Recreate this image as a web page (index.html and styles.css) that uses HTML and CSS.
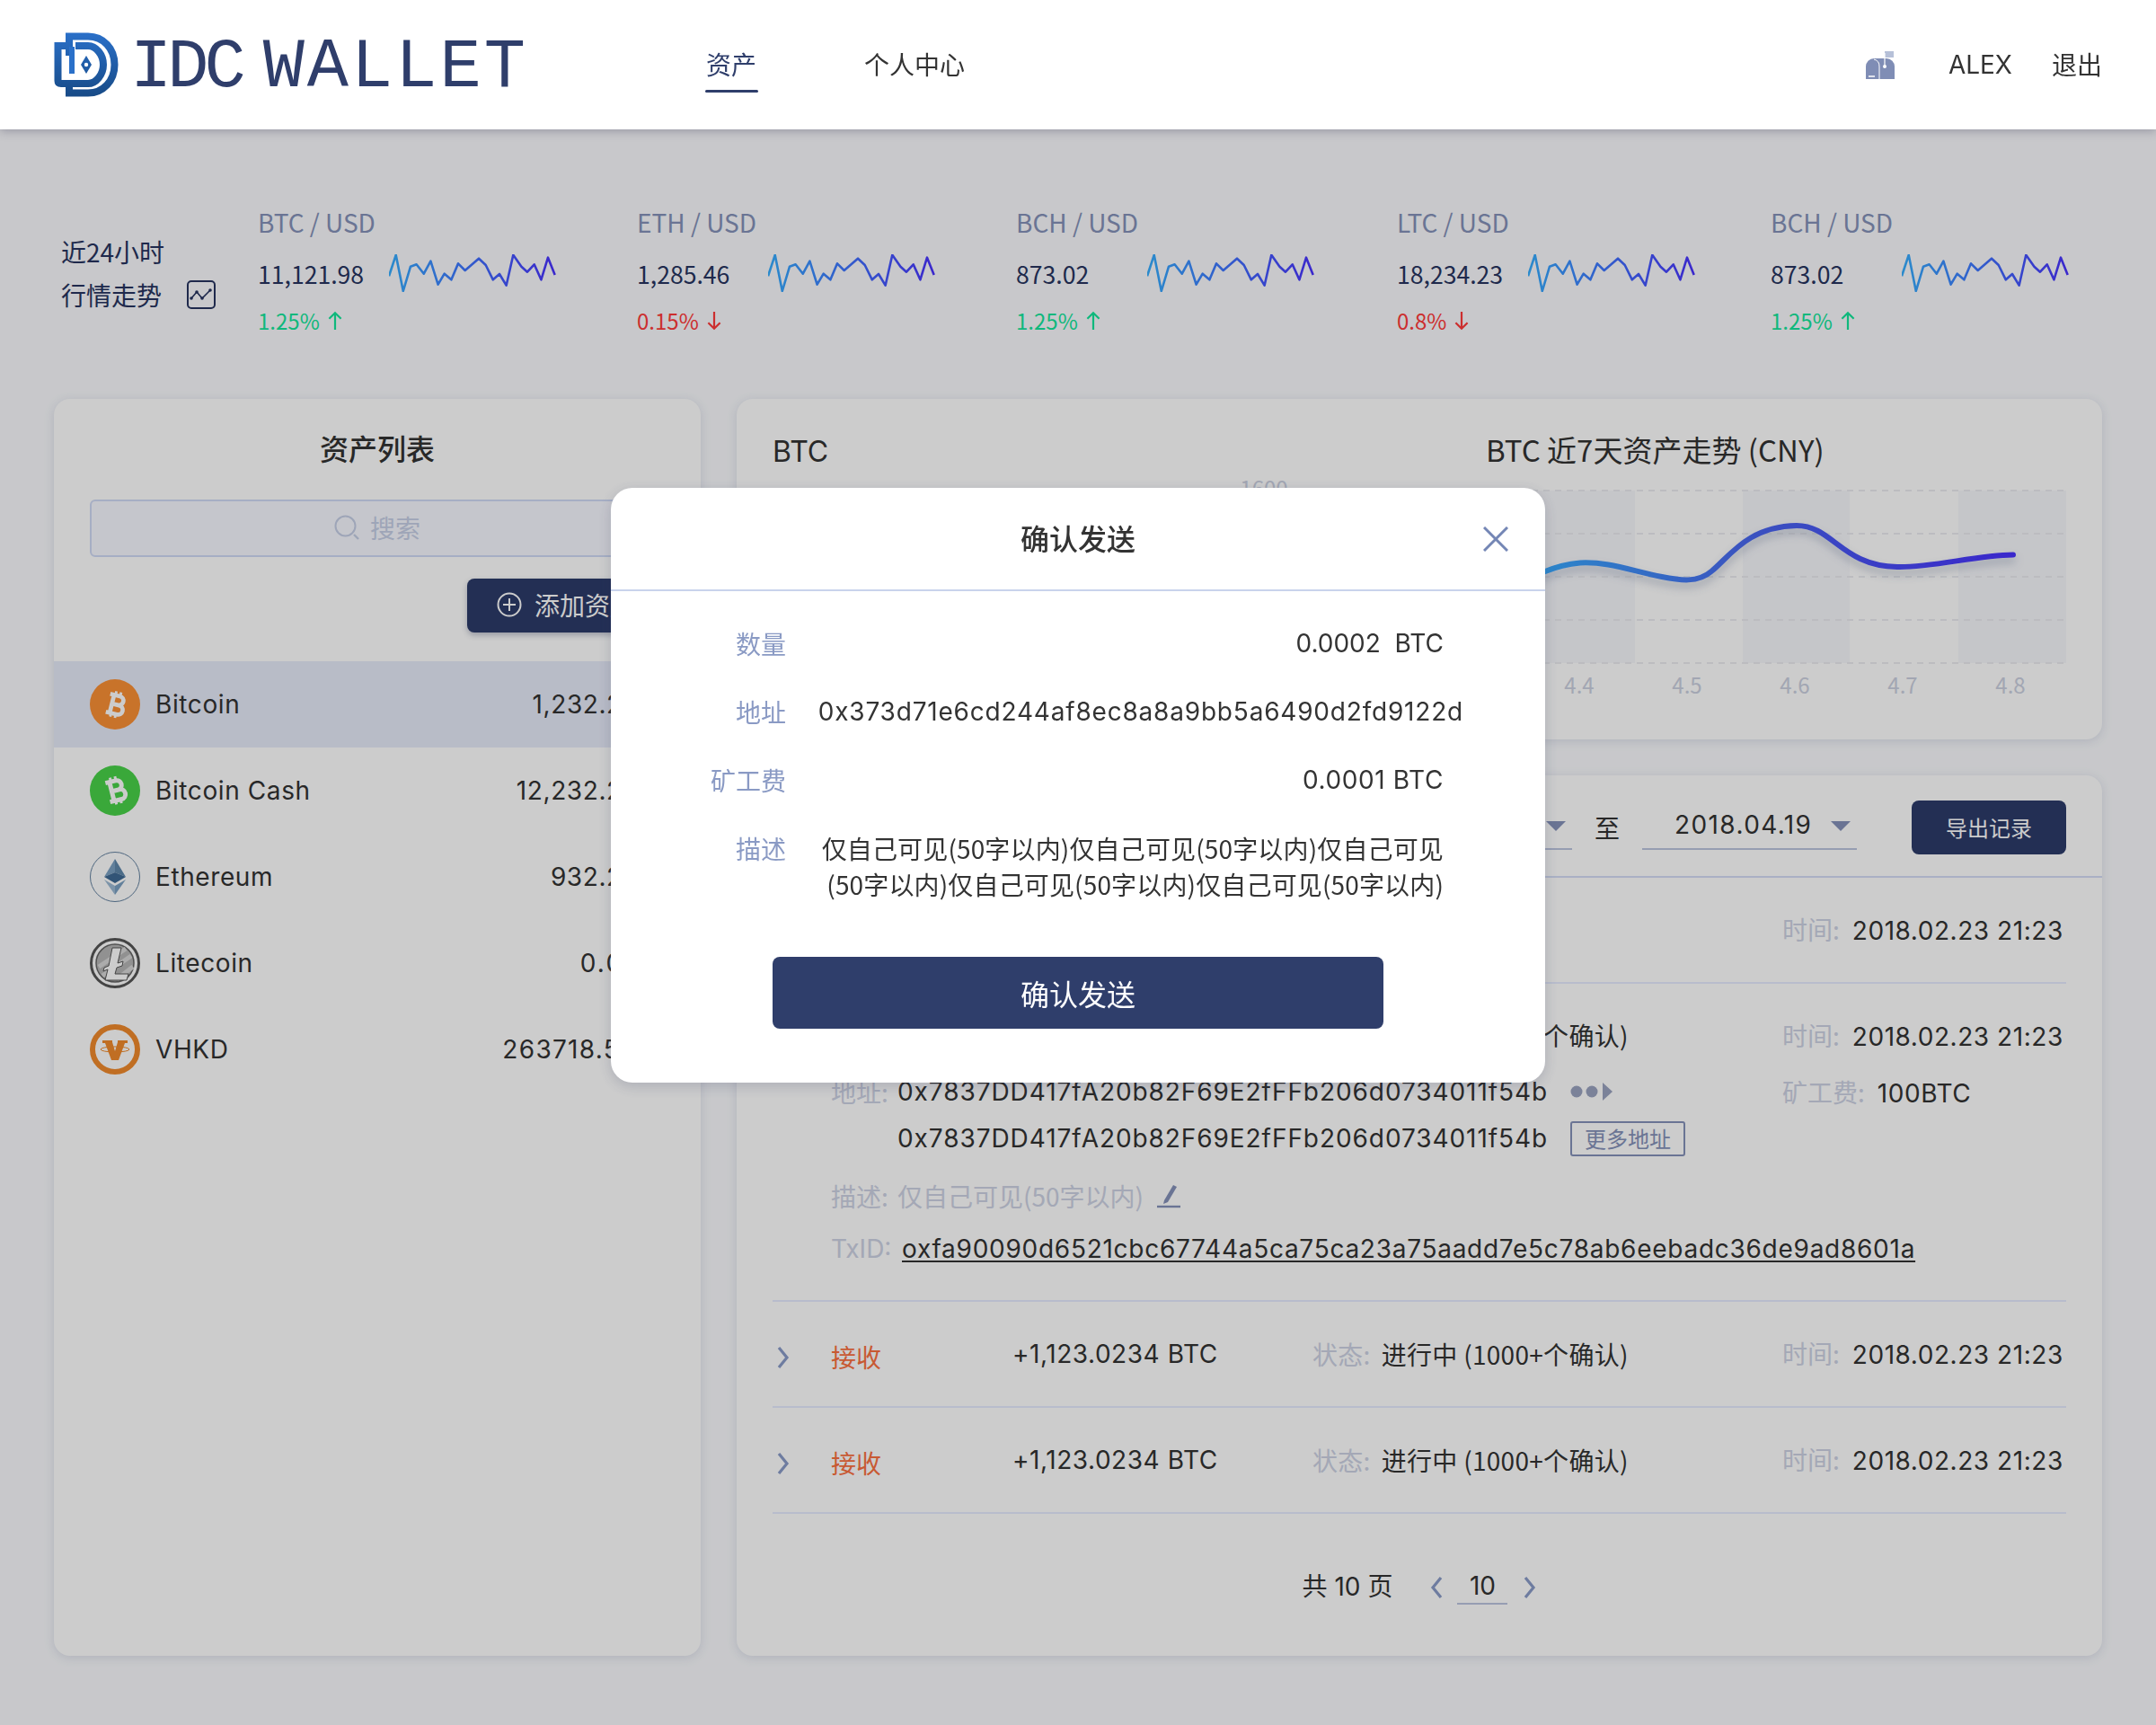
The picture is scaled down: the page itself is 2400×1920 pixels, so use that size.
FILE: index.html
```html
<!DOCTYPE html>
<html lang="zh-CN">
<head>
  <meta charset="UTF-8" />
  <title>IDC WALLET</title>
  <link rel="stylesheet" href="styles.css">
</head>
<body>
  <svg class="defs" width="0" height="0">
    <defs>
      <linearGradient id="sparkGrad" gradientUnits="userSpaceOnUse" x1="0" y1="0" x2="186" y2="0">
        <stop offset="0" stop-color="#36aeff"/>
        <stop offset="1" stop-color="#4a32ff"/>
      </linearGradient>
      <linearGradient id="curveGrad" gradientUnits="userSpaceOnUse" x1="1700" y1="0" x2="2241" y2="0">
        <stop offset="0" stop-color="#36aeff"/>
        <stop offset="0.45" stop-color="#4a68f0"/>
        <stop offset="1" stop-color="#4a32ff"/>
      </linearGradient>
      <linearGradient id="logoGrad" gradientUnits="userSpaceOnUse" x1="0" y1="0" x2="0" y2="72">
        <stop offset="0" stop-color="#2a70c9"/>
        <stop offset="1" stop-color="#174a86"/>
      </linearGradient>
      <symbol id="spark" viewBox="0 0 186 42">
        <polyline fill="none" stroke="url(#sparkGrad)" stroke-width="2.6" stroke-linejoin="round" points="0,24.3 7.7,0.8 15.8,41 24,13.7 30.6,11.3 38.8,21.7 46.4,7.7 54.6,33.7 61.7,21.7 69.4,28.3 77,10.3 84.7,18 100,4.7 107.7,12 115.8,28.3 123,22 130.6,34.7 138.3,0.8 147.4,13.7 154,19.7 161.7,11.3 169.4,28.3 177,3.7 184.7,23"/>
      </symbol>
      <symbol id="up" viewBox="0 0 16 20">
        <path d="M8 19V2M2 8l6-6 6 6" fill="none" stroke="#13e69b" stroke-width="2"/>
      </symbol>
      <symbol id="down" viewBox="0 0 16 20">
        <path d="M8 1v17M2 12l6 6 6-6" fill="none" stroke="#ff3a3a" stroke-width="2"/>
      </symbol>
      <symbol id="btcMark" viewBox="0 0 24 24">
        <path d="M7 5.600H14a3.200 3.200 0 0 1 0 6.400H9.500M9.500 12H15a3.300 3.300 0 0 1 0 6.600H7M9.800 5.600V18.600" fill="none" stroke="#fff" stroke-width="3"/>
        <path d="M10.800 2.800V6M14.200 2.800V6M10.800 18V21.200M14.200 18V21.200" fill="none" stroke="#fff" stroke-width="1.800"/>
      </symbol>
      <symbol id="chevR" viewBox="0 0 14 26">
        <path d="M2 2l9 11-9 11" fill="none" stroke="#8a9cc8" stroke-width="3.200"/>
      </symbol>
    </defs>
  </svg>

  <header class="navbar">
    <div class="logo">
      <svg class="logo-mark" viewBox="0 0 72 72">
        <path d="M17 26V4.500H38C55 4.500 67.500 18 67.500 36S55 67.500 38 67.500H17V60" fill="none" stroke="url(#logoGrad)" stroke-width="8"/>
        <path d="M13 15H4.500V54Q4.500 57 8 57H38C47 57 55 47 55 36S47 15 38 15H24" fill="none" stroke="url(#logoGrad)" stroke-width="8"/>
        <path d="M17 16h6v30h-6z" fill="#2a70c9"/>
        <path d="M36 26l6 10-6 10-6-10z" fill="url(#logoGrad)"/>
        <circle cx="36" cy="36" r="2.200" fill="#fff"/>
      </svg>
      <span class="logo-text"><span class="logo-idc">IDC</span><span class="logo-wallet">WALLET</span></span>
    </div>
    <nav class="nav-links">
      <a class="active" href="#">资产</a>
      <a href="#">个人中心</a>
    </nav>
    <div class="nav-user">
      <svg class="mailbox" viewBox="0 0 32 32">
        <path d="M21 1h10v7H21z" fill="#b6c0d8"/>
        <path d="M9 9h14a9 9 0 0 1 9 9v14H0V18a9 9 0 0 1 9-9z" fill="#7f8db5"/>
        <path d="M15 32V18a8 8 0 0 0-6-8" fill="none" stroke="#fff" stroke-width="1"/>
        <path d="M21 3v14" stroke="#fff" stroke-width="1.200"/>
        <circle cx="21" cy="18" r="2" fill="#fff"/>
        <path d="M3 29h7" stroke="#fff" stroke-width="1.500"/>
      </svg>
      <span class="user-name">ALEX</span>
      <a href="#">退出</a>
    </div>
  </header>

  <section class="ticker">
    <div class="ticker-label">
      <div>近24小时</div>
      <div class="ticker-label-2">行情走势
        <svg class="trend-icon" viewBox="0 0 32 32">
          <rect x="1" y="1" width="30" height="30" rx="4" fill="none" stroke="#273460" stroke-width="2"/>
          <path d="M5 20l6-7 6 7 9-9" fill="none" stroke="#273460" stroke-width="1.600"/>
          <circle cx="11" cy="13" r="1.800" fill="#273460"/><circle cx="17" cy="20" r="1.800" fill="#273460"/><circle cx="26" cy="11" r="1.800" fill="#273460"/><circle cx="5" cy="20" r="1.800" fill="#273460"/>
        </svg>
      </div>
    </div>
    <div class="tick">
      <div class="tick-name">BTC / USD</div>
      <div class="tick-mid"><span class="tick-val">11,121.98</span><svg class="spark"><use href="#spark"/></svg></div>
      <div class="tick-pct up">1.25% <svg class="arrow"><use href="#up"/></svg></div>
    </div>
    <div class="tick">
      <div class="tick-name">ETH / USD</div>
      <div class="tick-mid"><span class="tick-val">1,285.46</span><svg class="spark"><use href="#spark"/></svg></div>
      <div class="tick-pct down">0.15% <svg class="arrow"><use href="#down"/></svg></div>
    </div>
    <div class="tick">
      <div class="tick-name">BCH / USD</div>
      <div class="tick-mid"><span class="tick-val">873.02</span><svg class="spark"><use href="#spark"/></svg></div>
      <div class="tick-pct up">1.25% <svg class="arrow"><use href="#up"/></svg></div>
    </div>
    <div class="tick">
      <div class="tick-name">LTC / USD</div>
      <div class="tick-mid"><span class="tick-val">18,234.23</span><svg class="spark"><use href="#spark"/></svg></div>
      <div class="tick-pct down">0.8% <svg class="arrow"><use href="#down"/></svg></div>
    </div>
    <div class="tick">
      <div class="tick-name">BCH / USD</div>
      <div class="tick-mid"><span class="tick-val">873.02</span><svg class="spark"><use href="#spark"/></svg></div>
      <div class="tick-pct up">1.25% <svg class="arrow"><use href="#up"/></svg></div>
    </div>
  </section>

  <main class="content">
    <aside class="panel assets">
      <h2 class="assets-title">资产列表</h2>
      <div class="search">
        <svg class="search-icon" viewBox="0 0 28 28">
          <circle cx="12.500" cy="12.500" r="11" fill="none" stroke="#c6cfe6" stroke-width="2"/>
          <path d="M22 22l5 5" stroke="#c6cfe6" stroke-width="2.400"/>
        </svg>
        <span>搜索</span>
      </div>
      <div class="add-wrap">
        <button class="add-btn">
          <svg class="plus" viewBox="0 0 28 28">
            <circle cx="14" cy="14" r="12.500" fill="none" stroke="#fff" stroke-width="2"/>
            <path d="M14 7v14M7 14h14" stroke="#fff" stroke-width="2"/>
          </svg>
          添加资产
        </button>
      </div>
      <div class="coin active">
        <svg class="coin-icon" viewBox="0 0 56 56">
          <circle cx="28" cy="28" r="28" fill="#fa9035"/>
          <use href="#btcMark" x="9" y="9" width="38" height="38" transform="rotate(14 28 28)"/>
        </svg>
        <span class="coin-name">Bitcoin</span><span class="coin-val">1,232.2345</span>
      </div>
      <div class="coin">
        <svg class="coin-icon" viewBox="0 0 56 56">
          <circle cx="28" cy="28" r="28" fill="#49d249"/>
          <use href="#btcMark" x="8" y="8" width="40" height="40" transform="rotate(-14 28 28)"/>
        </svg>
        <span class="coin-name">Bitcoin Cash</span><span class="coin-val">12,232.2345</span>
      </div>
      <div class="coin">
        <svg class="coin-icon" viewBox="0 0 56 56">
          <circle cx="28" cy="28" r="27.500" fill="#fff" stroke="#62809f" stroke-width="1"/>
          <path d="M28 8L16 28l12-5z" fill="#7ba0c2"/>
          <path d="M28 8l12 20-12-5z" fill="#5f87ab"/>
          <path d="M16 28l12-5 12 5-12 7z" fill="#3f6a94"/>
          <path d="M16 31l12 7v10z" fill="#9dbad4"/>
          <path d="M40 31l-12 7v10z" fill="#7ba0c2"/>
        </svg>
        <span class="coin-name">Ethereum</span><span class="coin-val">932.2345</span>
      </div>
      <div class="coin">
        <svg class="coin-icon" viewBox="0 0 56 56">
          <circle cx="28" cy="28" r="26.500" fill="#fff" stroke="#555" stroke-width="3"/>
          <circle cx="28" cy="28" r="21" fill="#b6b6b6" stroke="#666" stroke-width="1.500"/>
          <path d="M10 32L40 12M14 42L46 20M30 46L48 32" stroke="#d8d8d8" stroke-width="5"/>
          <path d="M25 11h10l-4 17 6-2-1 5-6 2-2 7h15l-2 7H17l3-12-5 2 1-4 5-2z" fill="#fff" stroke="#555" stroke-width="1"/>
        </svg>
        <span class="coin-name">Litecoin</span><span class="coin-val wider">0.0012</span>
      </div>
      <div class="coin">
        <svg class="coin-icon" viewBox="0 0 56 56">
          <circle cx="28" cy="28" r="25" fill="#fff" stroke="#f08a2c" stroke-width="6"/>
          <path d="M14 18h11v2l3 10 3-10v-2h11v3h-3l-7 19h-8l-7-19h-3z" fill="#f08a2c"/>
          <ellipse cx="28" cy="28" rx="16" ry="3" fill="none" stroke="#f08a2c" stroke-width="1"/>
        </svg>
        <span class="coin-name">VHKD</span><span class="coin-val wide">263718.5000</span>
      </div>
    </aside>

    <div class="right-col">
      <section class="panel chart-panel">
        <div class="chart-head">
          <span class="chart-coin">BTC</span>
          <span class="chart-title">BTC 近7天资产走势 (CNY)</span>
        </div>
        <svg class="chart" viewBox="860 530 1440 260">
          <defs>
            <filter id="curveShadow" x="-5%" y="-30%" width="110%" height="160%">
              <feDropShadow dx="0" dy="6" stdDeviation="5" flood-color="#5a6a90" flood-opacity="0.35"/>
            </filter>
          </defs>
          <g fill="#f7f8fc">
            <rect x="980" y="546" width="120" height="192"/>
            <rect x="1220" y="546" width="120" height="192"/>
            <rect x="1460" y="546" width="120" height="192"/>
            <rect x="1700" y="546" width="120" height="192"/>
            <rect x="1940" y="546" width="119" height="192"/>
            <rect x="2180" y="546" width="120" height="192"/>
          </g>
          <g stroke="#ebecf0" stroke-width="2" stroke-dasharray="7 6">
            <path d="M860 546H2300"/>
            <path d="M860 594H2300"/>
            <path d="M860 642H2300"/>
            <path d="M860 690H2300"/>
            <path d="M860 738H2300"/>
          </g>
          <path d="M1660 668C1690 655 1715 630 1759 626.500C1790 625 1815 635 1850 642C1870 646 1890 649 1905 636C1925 620 1945 586 2000 585C2040 585 2050 630 2112 631C2150 632 2200 618 2241 617.500" fill="none" stroke="url(#curveGrad)" stroke-width="6" stroke-linecap="round" filter="url(#curveShadow)"/>
          <g class="chart-labels">
            <text x="1407" y="553">1600</text>
            <text x="1758" y="772">4.4</text>
            <text x="1878" y="772">4.5</text>
            <text x="1998" y="772">4.6</text>
            <text x="2118" y="772">4.7</text>
            <text x="2238" y="772">4.8</text>
          </g>
        </svg>
      </section>

      <section class="panel records">
        <div class="toolbar">
          <div class="date"><span>2018.04.12</span><i class="caret"></i></div>
          <span class="date-sep">至</span>
          <div class="date"><span>2018.04.19</span><i class="caret"></i></div>
          <button class="export">导出记录</button>
        </div>
        <div class="tx-list">
          <div class="tx">
            <div class="tx-row">
              <svg class="chev"><use href="#chevR"/></svg>
              <span class="tx-type">接收</span>
              <span class="tx-amt">+1,123.0234 BTC</span>
              <span class="tx-status"><em>状态:</em>已完成</span>
              <span class="tx-time"><em>时间:</em>2018.02.23 21:23</span>
            </div>
          </div>
          <div class="tx">
            <div class="tx-row open">
              <svg class="chev"><use href="#chevR"/></svg>
              <span class="tx-type">发送</span>
              <span class="tx-amt">-1,123.0234 BTC</span>
              <span class="tx-status"><em>状态:</em>进行中 (1000+个确认)</span>
              <span class="tx-time"><em>时间:</em>2018.02.23 21:23</span>
            </div>
            <div class="tx-detail">
              <div class="detail-main">
                <div class="line addr-line">
                  <em>地址:</em><span class="mono">0x7837DD417fA20b82F69E2fFFb206d0734011f54b</span>
                  <svg class="dots" viewBox="0 0 48 20">
                    <circle cx="7" cy="10" r="6.500" fill="#9aa3c0"/><circle cx="24" cy="10" r="6.500" fill="#9aa3c0"/><path d="M36 0l11 10-11 10z" fill="#9aa3c0"/>
                  </svg>
                </div>
                <div class="line addr-line2">
                  <em></em><span class="mono">0x7837DD417fA20b82F69E2fFFb206d0734011f54b</span>
                  <span class="more">更多地址</span>
                </div>
                <div class="line desc-line">
                  <em>描述:</em><span class="desc">仅自己可见(50字以内)</span>
                  <svg class="pencil" viewBox="0 0 28 28">
                    <path d="M9 19L19 2l4 2-10 17-5 2z" fill="#8592b9"/>
                    <path d="M1 26h26" stroke="#8592b9" stroke-width="2.400"/>
                  </svg>
                </div>
                <div class="line txid-line">
                  <em>TxID:</em><a class="txid" href="#">oxfa90090d6521cbc67744a5ca75ca23a75aadd7e5c78ab6eebadc36de9ad8601a</a>
                </div>
              </div>
              <div class="detail-side"><em>矿工费:</em>100BTC</div>
            </div>
          </div>
          <div class="tx">
            <div class="tx-row">
              <svg class="chev"><use href="#chevR"/></svg>
              <span class="tx-type">接收</span>
              <span class="tx-amt">+1,123.0234 BTC</span>
              <span class="tx-status"><em>状态:</em>进行中 (1000+个确认)</span>
              <span class="tx-time"><em>时间:</em>2018.02.23 21:23</span>
            </div>
          </div>
          <div class="tx">
            <div class="tx-row">
              <svg class="chev"><use href="#chevR"/></svg>
              <span class="tx-type">接收</span>
              <span class="tx-amt">+1,123.0234 BTC</span>
              <span class="tx-status"><em>状态:</em>进行中 (1000+个确认)</span>
              <span class="tx-time"><em>时间:</em>2018.02.23 21:23</span>
            </div>
          </div>
        </div>
        <div class="pager">
          <span>共 10 页</span>
          <svg class="pg-arrow flip"><use href="#chevR"/></svg>
          <span class="pg-num">10</span>
          <svg class="pg-arrow"><use href="#chevR"/></svg>
        </div>
      </section>
    </div>
  </main>

  <div class="overlay">
    <div class="modal">
      <div class="modal-head">
        <span class="modal-title">确认发送</span>
        <svg class="modal-close" viewBox="0 0 28 28">
          <path d="M1 1l26 26M27 1L1 27" fill="none" stroke="#7486b5" stroke-width="3"/>
        </svg>
      </div>
      <div class="modal-body">
        <div class="m-row"><label>数量</label><div class="m-val">0.0002&nbsp; BTC</div></div>
        <div class="m-row"><label>地址</label><div class="m-val m-addr">0x373d71e6cd244af8ec8a8a9bb5a6490d2fd9122d</div></div>
        <div class="m-row"><label>矿工费</label><div class="m-val m-fee">0.0001 BTC</div></div>
        <div class="m-row m-desc"><label>描述</label><div class="m-val">仅自己可见(50字以内)仅自己可见(50字以内)仅自己可见<br>(50字以内)仅自己可见(50字以内)仅自己可见(50字以内)</div></div>
      </div>
      <button class="modal-btn">确认发送</button>
    </div>
  </div>
</body>
</html>
```

FILE: styles.css
```css
* {
  box-sizing: border-box;
}
body {
  font-family: Inter, "Noto Sans CJK SC", sans-serif;
  background: #fafbfe;
  color: #333;
  margin: 0;
  font-size: 28px;
  height: 1920px;
  overflow: hidden;
}
a {
  color: inherit;
  text-decoration: none;
}
em {
  font-style: normal;
}
.defs {
  position: absolute;
}

/* header */
.navbar {
  display: flex;
  align-items: center;
  height: 144px;
  background: #fff;
  padding: 0 60px;
  position: relative;
  z-index: 20;
  box-shadow: 0 2px 10px rgba(60, 60, 90, 0.35);
}
.logo {
  display: flex;
  align-items: center;
  width: 726px;
}
.logo-mark {
  width: 72px;
  height: 72px;
}
.logo-text {
  display: flex;
  gap: 24px;
  margin: 7px 0 0 13px;
  font-family: "Liberation Mono", monospace;
  font-size: 77px;
  color: #2f3e6b;
  white-space: nowrap;
}
.logo-idc {
  letter-spacing: -5px;
}
.logo-wallet {
  letter-spacing: 3px;
}
.nav-links {
  display: flex;
  gap: 120px;
  padding-bottom: 3px;
  font-family: "Noto Sans CJK SC", sans-serif;
}
.nav-links a {
  position: relative;
  line-height: 40px;
}
.nav-links a.active {
  color: #2f3e6b;
}
.nav-links a.active::after {
  content: "";
  position: absolute;
  left: -1px;
  right: -2px;
  bottom: -12px;
  height: 3px;
  border-radius: 2px;
  background: #2f3e6b;
}
.nav-user {
  margin-left: auto;
  display: flex;
  align-items: center;
  font-family: "Noto Sans CJK SC", sans-serif;
}
.nav-user a {
  padding-bottom: 2px;
}
.mailbox {
  width: 32px;
  height: 32px;
}
.user-name {
  margin: 0 44px 0 60px;
  font-family: Inter, sans-serif;
}

/* ticker */
.ticker {
  display: grid;
  grid-template-columns: 219px 422px 422px 424px 416px 1fr;
  height: 300px;
  padding: 85px 0 0 68px;
  font-family: "Noto Sans CJK SC", sans-serif;
}
.ticker-label {
  padding-top: 27px;
  font-size: 28px;
  line-height: 48px;
  color: #273460;
}
.ticker-label-2 {
  display: flex;
  align-items: center;
  gap: 28px;
}
.trend-icon {
  width: 32px;
  height: 32px;
}
.tick-name {
  font-size: 28px;
  line-height: 36px;
  color: #8592b9;
}
.tick-mid {
  display: flex;
  align-items: center;
  height: 42px;
  margin-top: 18px;
}
.tick-val {
  width: 146px;
  font-size: 26.600px;
  color: #273460;
}
.spark {
  width: 186px;
  height: 42px;
}
.tick-pct {
  display: flex;
  align-items: center;
  gap: 8px;
  margin-top: 14px;
  font-size: 24px;
  line-height: 36px;
}
.tick-pct.up {
  color: #13e69b;
}
.tick-pct.down {
  color: #ff3a3a;
}
.arrow {
  width: 18px;
  height: 22px;
}

/* panels */
.content {
  display: flex;
  gap: 40px;
  padding: 0 60px;
}
.panel {
  background: #fff;
  border-radius: 18px;
  box-shadow: 0 2px 12px rgba(70, 80, 130, 0.16);
}
.assets {
  width: 720px;
  height: 1399px;
  padding-top: 34px;
}
.assets-title {
  margin: 0;
  font-family: "Noto Sans CJK SC", sans-serif;
  font-size: 32px;
  font-weight: 500;
  line-height: 40px;
  text-align: center;
}
.search {
  display: flex;
  align-items: center;
  justify-content: center;
  gap: 12px;
  height: 64px;
  margin: 38px 40px 0;
  padding-bottom: 2px;
  background: #f7f8ff;
  border: 2px solid #d0daf5;
  border-radius: 6px;
  color: #c6cfe6;
  font-family: "Noto Sans CJK SC", sans-serif;
}
.search-icon {
  width: 28px;
  height: 28px;
}
.add-wrap {
  display: flex;
  justify-content: flex-end;
  margin: 24px 40px 32px 0;
}
.add-btn {
  display: flex;
  align-items: center;
  gap: 14px;
  width: 220px;
  height: 60px;
  padding: 0 33px 2px;
  border: 0;
  border-radius: 8px;
  background: #2c3b6a;
  color: #fff;
  font: 28px "Noto Sans CJK SC", sans-serif;
  white-space: nowrap;
  box-shadow: 0 3px 6px rgba(40, 50, 90, 0.3);
}
.plus {
  width: 28px;
  height: 28px;
  flex: none;
}
.coin {
  display: flex;
  align-items: center;
  height: 96px;
  padding: 0 33px 0 40px;
}
.coin.active {
  background: #e7ebf9;
}
.coin-icon {
  width: 56px;
  height: 56px;
  flex: none;
}
.coin-name {
  margin-left: 17px;
  letter-spacing: 0.6px;
}
.coin-val {
  margin-left: auto;
  letter-spacing: 0.6px;
}
.coin-val.wide {
  letter-spacing: 1.300px;
}
.coin-val.wider {
  letter-spacing: 2.200px;
}

/* chart */
.right-col {
  display: flex;
  flex-direction: column;
  gap: 40px;
  width: 1520px;
}
.chart-panel {
  height: 379px;
  padding: 36px 40px 0;
}
.chart-head {
  display: flex;
  height: 40px;
  line-height: 40px;
  margin-bottom: 10px;
  font-family: "Noto Sans CJK SC", sans-serif;
  font-size: 33px;
}
.chart-coin {
  width: 794px;
  padding-top: 3px;
  font-family: Inter, sans-serif;
  font-size: 32px;
}
.chart {
  display: block;
  width: 1440px;
  height: 260px;
}
.chart-labels text {
  font-family: "Noto Sans CJK SC", sans-serif;
  font-size: 24px;
  fill: #cbd0e0;
  text-anchor: middle;
}

/* records */
.records {
  height: 980px;
}
.toolbar {
  display: flex;
  align-items: center;
  justify-content: flex-end;
  height: 114px;
  padding: 3px 40px 0;
  border-bottom: 2px solid #d5ddf5;
}
.date {
  display: flex;
  align-items: center;
  width: 239px;
  height: 50px;
  padding: 0 7px 4px 36px;
  border-bottom: 2px solid #bcc5df;
  justify-content: space-between;
  letter-spacing: 1.400px;
}
.caret {
  width: 0;
  height: 0;
  border-left: 11px solid transparent;
  border-right: 11px solid transparent;
  border-top: 11px solid #8592b9;
  margin-top: 4px;
}
.date-sep {
  margin: 0 25px;
  font-family: "Noto Sans CJK SC", sans-serif;
}
.export {
  width: 172px;
  height: 60px;
  margin-left: 61px;
  border: 0;
  border-radius: 8px;
  background: #2c3b6a;
  color: #fff;
  font: 24px "Noto Sans CJK SC", sans-serif;
}
.tx-list {
  padding: 0 40px;
}
.tx {
  border-bottom: 2px solid #e7ecff;
}
.tx-row {
  display: grid;
  grid-template-columns: 65px 202px 334px 523px 1fr;
  align-items: center;
  height: 116px;
  white-space: nowrap;
}
.tx-row.open {
  height: 100px;
  align-items: start;
  padding-top: 37px;
}
.tx-row em,
.line em,
.detail-side em {
  color: #cdd2e4;
  font-family: "Noto Sans CJK SC", sans-serif;
}
.chev {
  width: 14px;
  height: 26px;
  margin: 8px 0 0 5px;
}
.tx-type {
  margin-top: 6px;
  color: #fa7040;
  font-family: "Noto Sans CJK SC", sans-serif;
}
.tx-status em {
  margin-right: 12px;
}
.tx-status,
.tx-time,
.tx-amt,
.detail-side,
.mono,
.txid {
  line-height: 40px;
}
.tx-status {
  font-family: "Noto Sans CJK SC", sans-serif;
  letter-spacing: 0.300px;
}
.tx-amt,
.tx-time,
.detail-side {
  letter-spacing: 0.550px;
}
.tx-time em {
  margin-right: 14px;
  letter-spacing: 0;
}
.tx-detail {
  display: grid;
  grid-template-columns: 1059px 1fr;
  padding: 0 0 37px 65px;
}
.line {
  display: flex;
  align-items: center;
  line-height: 40px;
  white-space: nowrap;
}
.line em {
  width: 74px;
  flex: none;
}
.mono {
  letter-spacing: 0.930px;
}
.addr-line2 {
  margin-top: 12px;
}
.desc-line {
  margin-top: 24px;
}
.txid-line {
  margin-top: 19px;
}
.txid-line em {
  width: 79px;
  font-family: Inter, sans-serif;
}
.dots {
  width: 48px;
  height: 20px;
  margin-left: 25px;
  flex: none;
}
.more {
  display: block;
  margin-left: 25px;
  padding: 0 14px;
  height: 39px;
  line-height: 33px;
  border: 2px solid #8592b9;
  border-radius: 3px;
  color: #8592b9;
  font: 24px/33px "Noto Sans CJK SC", sans-serif;
}
.desc {
  color: #cdd2e4;
  font-family: "Noto Sans CJK SC", sans-serif;
}
.pencil {
  width: 28px;
  height: 28px;
  margin-left: 14px;
}
.txid {
  letter-spacing: 0.730px;
  text-decoration: underline;
  text-underline-offset: 3px;
}
.detail-side em {
  margin-right: 14px;
  letter-spacing: 0;
}
.pager {
  display: flex;
  align-items: center;
  justify-content: center;
  margin-top: 61px;
  line-height: 40px;
}
.pg-arrow {
  width: 14px;
  height: 26px;
  margin: 2px 0 0 0;
}
.pg-arrow.flip {
  transform: scaleX(-1);
  margin-left: 42px;
}
.pg-num {
  width: 56px;
  margin: 0 18px 0 16px;
  text-align: center;
  border-bottom: 2px solid #bcc5df;
  line-height: 38px;
}

/* modal */
.overlay {
  position: fixed;
  inset: 0;
  z-index: 10;
  background: rgba(0, 0, 0, 0.2);
  padding-top: 543px;
}
.modal {
  position: relative;
  width: 1040px;
  height: 662px;
  margin: 0 auto;
  background: #fff;
  border-radius: 24px;
  box-shadow: 0 4px 16px rgba(40, 50, 90, 0.2);
}
.modal-head {
  display: flex;
  align-items: center;
  justify-content: center;
  height: 115px;
  padding-bottom: 3px;
  border-bottom: 2px solid #c9d3ec;
}
.modal-title {
  font-family: "Noto Sans CJK SC", sans-serif;
  font-size: 32px;
  font-weight: 500;
}
.modal-close {
  position: absolute;
  top: 43px;
  right: 41px;
  width: 28px;
  height: 28px;
}
.modal-body {
  padding: 38px 113px 0 0;
}
.m-row {
  display: flex;
  align-items: flex-start;
  height: 76px;
  line-height: 40px;
}
.m-row label {
  width: 195px;
  flex: none;
  text-align: right;
  color: #8a9ac4;
  font-family: "Noto Sans CJK SC", sans-serif;
}
.m-val {
  flex: 1;
  margin-left: 20px;
  text-align: right;
}
.m-addr {
  margin-right: -22px;
  margin-left: 0;
  letter-spacing: 0.800px;
  white-space: nowrap;
}
.m-fee {
  letter-spacing: 0.600px;
}
.m-desc {
  height: auto;
}
.m-desc .m-val {
  font-family: "Noto Sans CJK SC", sans-serif;
  letter-spacing: 0.150px;
}
.modal-btn {
  display: block;
  width: 680px;
  height: 80px;
  margin: 61px auto 0;
  padding-bottom: 2px;
  border: 0;
  border-radius: 8px;
  background: #2f3e6b;
  color: #fff;
  font: 32px "Noto Sans CJK SC", sans-serif;
}
```
